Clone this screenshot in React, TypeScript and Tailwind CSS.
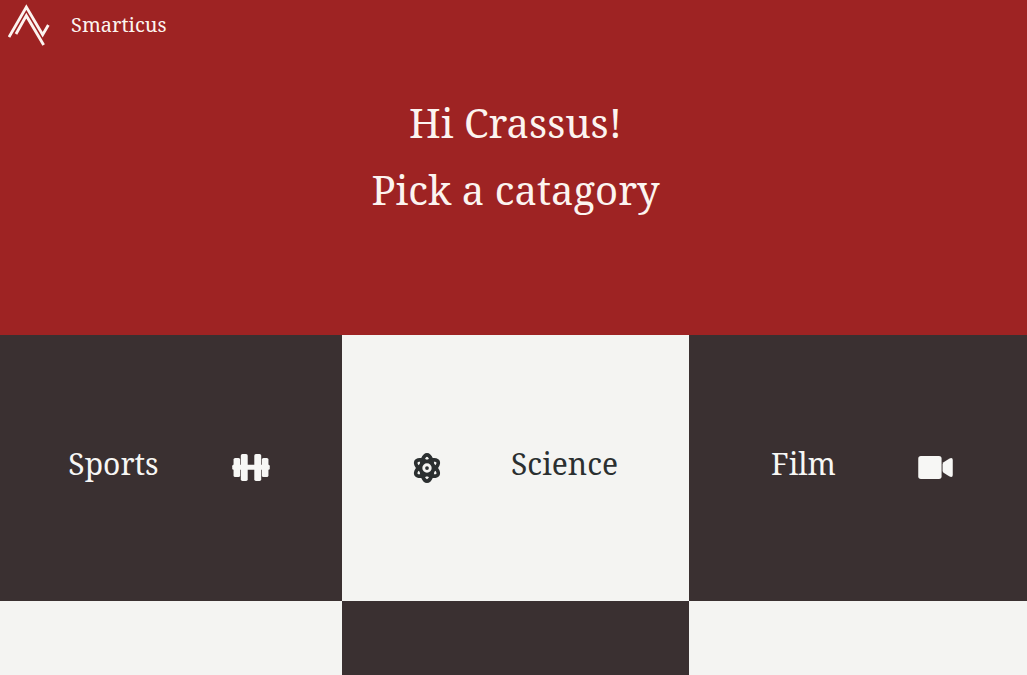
import type { ComponentType } from "react";
import { FaAtom } from "react-icons/fa";

type IconProps = { className?: string };
type Category = { name: string; Icon: ComponentType<IconProps>; className: string; iconClassName: string };

function Dumbbell({ className }: IconProps) {
  return (
    <svg viewBox="0 0 114 82" className={className} fill="currentColor" aria-hidden="true">
      <rect x="0" y="33" width="114" height="15" rx="4" />
      <rect x="4" y="12" width="20" height="58" rx="5" />
      <rect x="26" y="0" width="21" height="82" rx="5" />
      <rect x="67" y="0" width="21" height="82" rx="5" />
      <rect x="90" y="12" width="20" height="58" rx="5" />
    </svg>
  );
}

function VideoCamera({ className }: IconProps) {
  return (
    <svg viewBox="0 0 105 70" className={className} fill="currentColor" aria-hidden="true">
      <rect x="0" y="0" width="71" height="70" rx="8" />
      <path d="M74 26Q74 22 77 19L94 8Q105 3 105 12V58Q105 67 94 62L77 51Q74 48 74 44Z" />
    </svg>
  );
}

const categories: Category[] = [
  {
    name: "Sports",
    Icon: Dumbbell,
    className: "gap-[73px] pr-1 bg-[#3a3031] text-[#f7f7f5]",
    iconClassName: "h-[27px] w-[38px]",
  },
  {
    name: "Science",
    Icon: FaAtom,
    className: "flex-row-reverse gap-[69px] pr-px bg-[#f4f4f2] text-[#2b2f30]",
    iconClassName: "h-[30px] w-[30px]",
  },
  {
    name: "Film",
    Icon: VideoCamera,
    className: "gap-[82px] pl-2 bg-[#3a3031] text-[#f7f7f5]",
    iconClassName: "h-[23px] w-[35px]",
  },
];

function Logo() {
  return (
    <svg viewBox="23 12 126 126" className="h-[42px] w-[42px]" fill="none" stroke="currentColor" aria-hidden="true">
      <path d="M26 111 78 21 127 104 144 75M47 102 78 47 130 135" strokeWidth="8.5" />
    </svg>
  );
}

export default function App() {
  return (
    <div className="flex h-screen flex-col overflow-hidden font-['Noto_Serif',serif]">
      <header className="flex h-[335px] shrink-0 flex-col bg-[#9e2323] text-[#fcf4f0]">
        <nav className="flex h-[50px] items-center px-2">
          <a href="#" className="flex items-center gap-[21px] text-xl">
            <Logo />
            Smarticus
          </a>
        </nav>
        <h1 className="mt-[39px] pl-1 text-center text-[40px] leading-[67px]">
          Hi Crassus!
          <br />
          Pick a catagory
        </h1>
      </header>
      <main className="grid grow grid-cols-[342fr_347fr_338fr] grid-rows-[266px_266px]">
        {categories.map(({ name, Icon, className, iconClassName }) => (
          <button key={name} type="button" className={`flex items-center justify-center pb-px text-3xl ${className}`}>
            <span className="pb-2">{name}</span>
            <Icon className={iconClassName} />
          </button>
        ))}
        <div className="bg-[#f4f4f2]" />
        <div className="bg-[#3a3031]" />
        <div className="bg-[#f4f4f2]" />
      </main>
    </div>
  );
}
